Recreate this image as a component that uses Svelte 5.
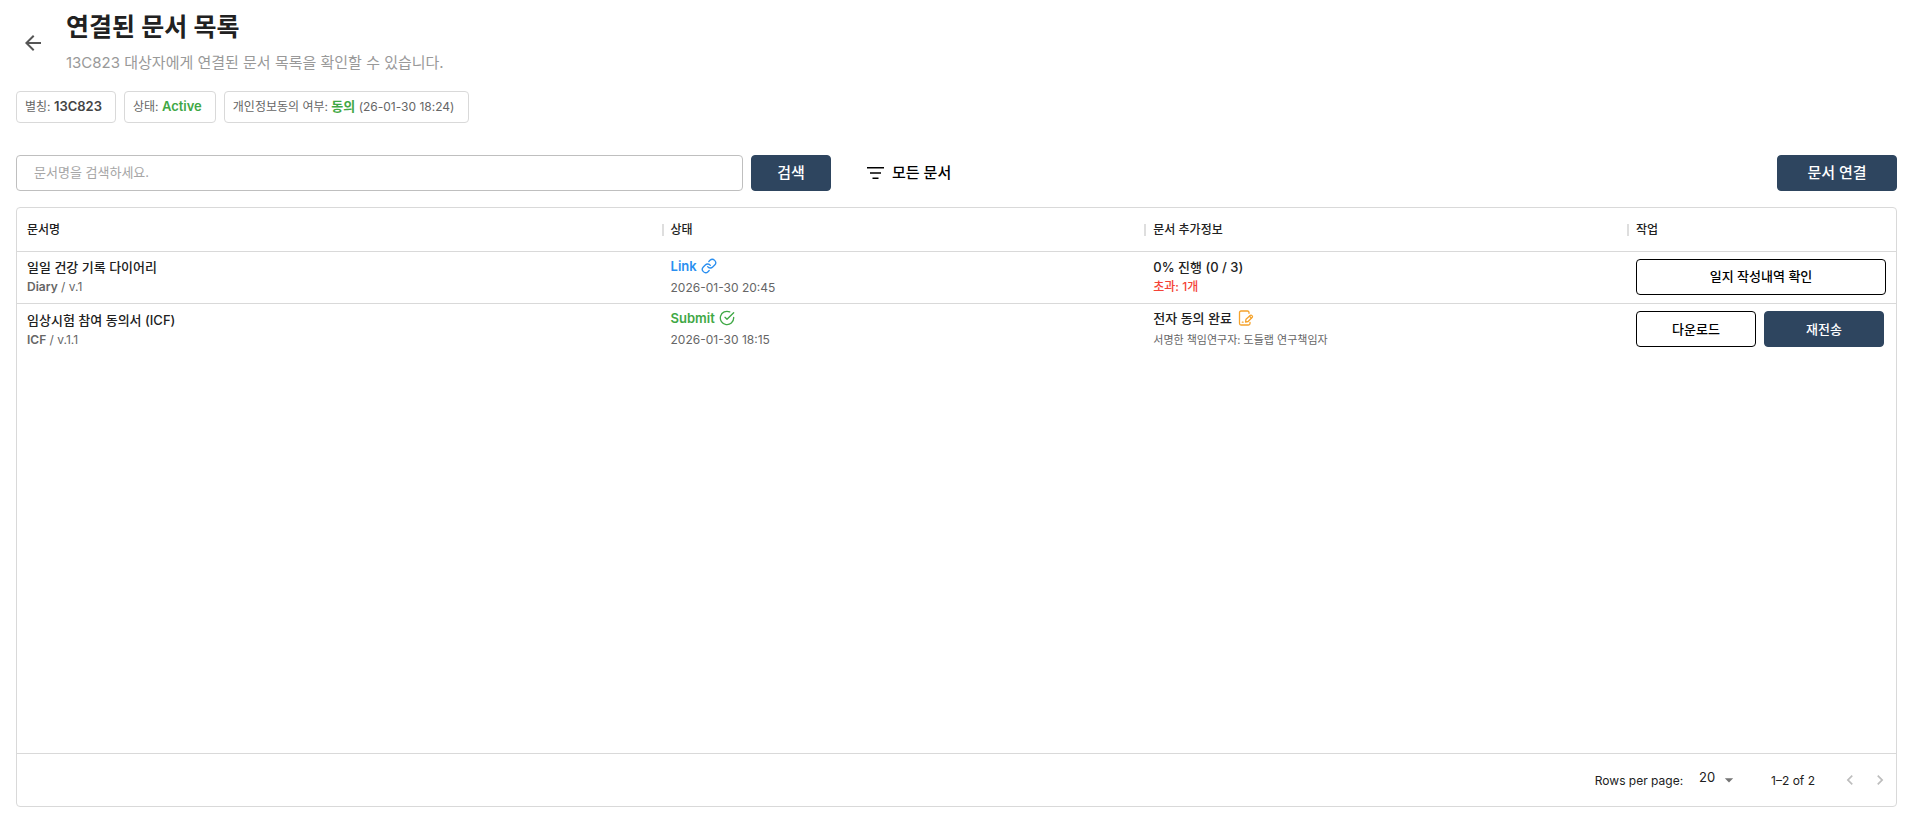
<script>
  let query = $state('');
  let rowsPerPage = $state('20');
</script>

<main class="page">
  <header class="head">
    <button class="back" type="button" aria-label="뒤로">
      <svg viewBox="0 0 24 24" width="24" height="24" fill="currentColor"><path d="M20 11H7.83l5.59-5.59L12 4l-8 8 8 8 1.41-1.41L7.83 13H20v-2z" /></svg>
    </button>
    <div class="titles">
      <h1>연결된 문서 목록</h1>
      <p>13C823 대상자에게 연결된 문서 목록을 확인할 수 있습니다.</p>
    </div>
  </header>

  <div class="chips">
    <div class="chip">별칭: <b>13C823</b></div>
    <div class="chip">상태: <b class="green">Active</b></div>
    <div class="chip">개인정보동의 여부: <b class="green">동의</b> (26-01-30 18:24)</div>
  </div>

  <div class="toolbar">
    <input class="search" type="text" aria-label="문서명" placeholder="문서명을 검색하세요." bind:value={query} />
    <button class="btn solid find" type="button">검색</button>
    <button class="filter" type="button">
      <svg viewBox="0 0 17 12" width="17" height="12" stroke="currentColor" fill="none"><path d="M0 .7h17M3 6h11M5.500 11.300h6" stroke-width="1.400" /></svg>
      <span>모든 문서</span>
    </button>
    <button class="btn solid connect" type="button">문서 연결</button>
  </div>

  <section class="grid">
    <table>
      <colgroup><col class="c-name" /><col /><col /><col class="c-work" /></colgroup>
      <thead>
        <tr><th>문서명</th><th>상태</th><th>문서 추가정보</th><th>작업</th></tr>
      </thead>
      <tbody>
        <tr>
          <td>
            <div class="name">일일 건강 기록 다이어리</div>
            <div class="sub"><b>Diary</b> / v.1</div>
          </td>
          <td>
            <div class="status blue">Link
              <svg viewBox="0 0 24 24" width="16" height="16" fill="none" stroke="currentColor" stroke-width="2" stroke-linecap="round" stroke-linejoin="round"><path d="M10 13a5 5 0 0 0 7.540.540l3-3a5 5 0 0 0-7.070-7.070l-1.720 1.710" /><path d="M14 11a5 5 0 0 0-7.540-.540l-3 3a5 5 0 0 0 7.070 7.070l1.710-1.710" /></svg>
            </div>
            <div class="date">2026-01-30 20:45</div>
          </td>
          <td>
            <div class="name">0% 진행 (0 / 3)</div>
            <div class="sub red">초과: 1개</div>
          </td>
          <td>
            <div class="actions"><button class="btn outline wide" type="button">일지 작성내역 확인</button></div>
          </td>
        </tr>
        <tr>
          <td>
            <div class="name">임상시험 참여 동의서 (ICF)</div>
            <div class="sub"><b>ICF</b> / v.1.1</div>
          </td>
          <td>
            <div class="status green">Submit
              <svg viewBox="0 0 24 24" width="16" height="16" fill="none" stroke="currentColor" stroke-width="2" stroke-linecap="round" stroke-linejoin="round"><path d="M22 11.080V12a10 10 0 1 1-5.930-9.140" /><path d="M22 4 12 14.010l-3-3" /></svg>
            </div>
            <div class="date">2026-01-30 18:15</div>
          </td>
          <td>
            <div class="status dark">전자 동의 완료
              <svg class="orange" viewBox="0 0 16 16" width="16" height="16" fill="none" stroke="currentColor" stroke-width="1.300" stroke-linecap="round" stroke-linejoin="round"><path d="M11 3.300V2.500A1.500 1.500 0 0 0 9.500 1H3a1.500 1.500 0 0 0-1.500 1.500v11A1.500 1.500 0 0 0 3 15h7.500a1.500 1.500 0 0 0 1.500-1.500v-1.200" /><path d="M7.500 12 8 9.300l4.500-4c.800-.700 2.600 1 1.800 1.900l-4.200 4.300z" /><path d="m11.500 6.300 1.800 1.800" /><path d="M4.300 12.200h.800" /></svg>
            </div>
            <div class="date ko">서명한 책임연구자: 도들랩 연구책임자</div>
          </td>
          <td>
            <div class="actions">
              <button class="btn outline" type="button">다운로드</button>
              <button class="btn solid" type="button">재전송</button>
            </div>
          </td>
        </tr>
      </tbody>
    </table>

    <footer>
      <label for="rows">Rows per page:</label>
      <span class="select">
        <select id="rows" bind:value={rowsPerPage}><option>20</option><option>50</option><option>100</option></select>
        <svg viewBox="0 0 24 24" width="20" height="20" fill="currentColor"><path d="m7 10 5 5 5-5z" /></svg>
      </span>
      <span class="range">1–2 of 2</span>
      <button class="nav" type="button" disabled aria-label="이전 페이지"><svg viewBox="0 0 24 24" width="20" height="20" fill="currentColor"><path d="M15.410 7.410 14 6l-6 6 6 6 1.410-1.410L10.830 12z" /></svg></button>
      <button class="nav" type="button" disabled aria-label="다음 페이지"><svg viewBox="0 0 24 24" width="20" height="20" fill="currentColor"><path d="M10 6 8.590 7.410 13.170 12l-4.580 4.590L10 18l6-6z" /></svg></button>
    </footer>
  </section>
</main>

<style>
  :global(body) { margin: 0; background: #fff; }
  .page {
    box-sizing: border-box;
    min-height: 100vh;
    padding: 8px 12px 14px 16px;
    display: flex;
    flex-direction: column;
    font-family: Inter, "Noto Sans CJK KR", sans-serif;
    font-size: 13px;
    color: #212121;
  }
  button, input, select { font-family: inherit; margin: 0; }
  button { cursor: pointer; }
  svg { display: block; flex: none; }
  .head { display: flex; align-items: center; gap: 16px; }
  .back { border: 0; background: none; margin-top: 4px; padding: 5px; color: #555; }
  .titles { display: flex; flex-direction: column; gap: 6px; }
  h1 { margin: 0; font-size: 25px; line-height: 38px; font-weight: 600; }
  p { margin: 0; font-size: 15px; line-height: 22px; color: #999; }
  .chips { display: flex; gap: 8px; margin-top: 17px; }
  .chip {
    box-sizing: border-box;
    height: 32px;
    padding: 0 13px 0 8px;
    border: 1px solid #d9d9d9;
    border-radius: 4px;
    line-height: 28px;
    font-size: 12px;
    color: #666;
  }
  .chip b { font-size: 13px; font-weight: 600; color: #444; }
  .chip b.green, .green { color: #3fa845; }
  .toolbar { display: flex; align-items: center; margin-top: 32px; }
  .search {
    box-sizing: border-box;
    flex: 0 1 727px;
    min-width: 0;
    height: 36px;
    padding: 0 17px 2px;
    border: 1px solid #bfbfbf;
    border-radius: 4px;
    font-size: 13px;
    background: #fff;
  }
  .search::placeholder { color: #a6a6a6; opacity: 1; }
  .btn {
    box-sizing: border-box;
    flex: none;
    width: 120px;
    height: 36px;
    padding: 0 0 2px;
    border: 1px solid #000;
    border-radius: 4px;
    font-size: 13px;
    font-weight: 500;
    background: #fff;
    color: #000;
  }
  .btn.solid { background: #2e455f; border-color: #2e455f; color: #fff; }
  .btn.wide { width: 250px; }
  .toolbar .btn { padding-bottom: 4px; font-size: 15px; }
  .toolbar .find { width: 80px; margin-left: 8px; }
  .filter {
    display: flex;
    flex: none;
    align-items: center;
    gap: 8px;
    margin-left: 36px;
    padding: 0;
    border: 0;
    background: none;
    font-size: 15px;
    font-weight: 500;
    color: #000;
  }
  .filter span { padding-bottom: 4px; }
  .toolbar .connect { margin-left: auto; }
  .grid {
    flex: 1;
    margin-top: 16px;
    border: 1px solid #d9d9d9;
    border-radius: 4px;
    display: flex;
    flex-direction: column;
  }
  table { width: 100%; table-layout: fixed; border-collapse: separate; border-spacing: 0; }
  .c-name { width: 34.250%; }
  .c-work { width: 270px; }
  th {
    box-sizing: border-box;
    height: 44px;
    padding: 0 10px 2px;
    border-bottom: 1px solid #d9d9d9;
    text-align: left;
    font-size: 12px;
    font-weight: 500;
    background: linear-gradient(#dedede, #dedede) 1px center / 2px 12px no-repeat;
  }
  th:first-child { background: none; }
  td { box-sizing: border-box; height: 52px; padding: 0 10px 2px; vertical-align: middle; }
  tbody tr:first-child td { border-bottom: 1px solid #d9d9d9; }
  .name { margin-bottom: 1px; font-size: 13px; line-height: 20px; font-weight: 500; }
  .sub { font-size: 12px; line-height: 18px; color: #666; }
  .sub b { font-weight: 600; }
  .sub.red { color: #f44336; font-weight: 500; }
  .status { display: flex; align-items: center; gap: 4px; font-size: 13px; line-height: 20px; font-weight: 600; }
  .status.dark { gap: 6px; font-weight: 500; }
  .blue { color: #2a8ff0; }
  .orange { color: #f5a32c; }
  .date { margin-top: 2px; font-size: 12px; line-height: 20px; color: #666; }
  .date.ko { font-size: 11px; }
  .actions { display: flex; gap: 8px; }
  footer {
    margin-top: auto;
    height: 52px;
    border-top: 1px solid #d9d9d9;
    display: flex;
    align-items: center;
    padding-right: 1px;
    font-size: 12px;
  }
  footer label { margin-left: auto; }
  .select { display: flex; align-items: center; margin-left: 16px; }
  select { appearance: none; width: 20px; border: 0; padding: 0 0 6px; background: none; font-size: 13px; color: #212121; }
  .select svg { color: #757575; }
  .range { margin: 0 20px 0 32px; }
  .nav { border: 0; background: none; padding: 5px; color: #bdbdbd; }
</style>
